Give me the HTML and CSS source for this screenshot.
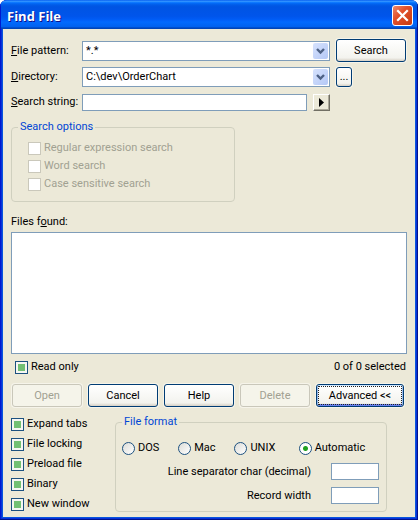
FILE: index.html
```html
<!DOCTYPE html>
<html lang="en">
<head>
<meta charset="utf-8">
<title>Find File</title>
<link rel="stylesheet" href="styles.css">
</head>
<body>
<div class="window">
  <header class="titlebar">
    <h1>Find File</h1>
    <button class="close" type="button" aria-label="Close">
      <svg viewBox="0 0 13 13" width="13" height="13"><path d="M2 2L11 11M11 2L2 11" stroke="#fff" stroke-width="2.2" stroke-linecap="square"/></svg>
    </button>
  </header>
  <form class="dialog">
    <div class="search">
      <label for="pattern"><u>F</u>ile pattern:</label>
      <div class="combo">
        <select id="pattern"><option>*.*</option></select>
        <svg class="drop" viewBox="0 0 15 15"><path d="M4 5.5L7.5 9L11 5.5" fill="none" stroke="#4d6185" stroke-width="2.4"/></svg>
      </div>
      <button class="btn" type="button">Search</button>

      <label for="directory"><u>D</u>irectory:</label>
      <div class="combo">
        <select id="directory"><option>C:\dev\OrderChart</option></select>
        <svg class="drop" viewBox="0 0 15 15"><path d="M4 5.5L7.5 9L11 5.5" fill="none" stroke="#4d6185" stroke-width="2.4"/></svg>
      </div>
      <button class="btn browse" type="button">...</button>

      <label for="string"><u>S</u>earch string:</label>
      <div class="string">
        <input class="text" id="string" type="text">
        <button class="arrow" type="button" aria-label="Expressions">
          <svg viewBox="0 0 5 9" width="5" height="9"><path d="M0 0L5 4.5L0 9Z"/></svg>
        </button>
      </div>
    </div>

    <fieldset class="group options">
      <legend>Search options</legend>
      <label class="check"><input type="checkbox" disabled>Regular expression search</label>
      <label class="check"><input type="checkbox" disabled>Word search</label>
      <label class="check"><input type="checkbox" disabled>Case sensitive search</label>
    </fieldset>

    <label class="found" for="files">Files f<u>o</u>und:</label>
    <select class="files" id="files" size="8"></select>

    <div class="status">
      <label class="check"><input type="checkbox" checked>Read only</label>
      <span>0 of 0 selected</span>
    </div>

    <div class="actions">
      <button class="btn" type="button" disabled>Open</button>
      <button class="btn" type="button">Cancel</button>
      <button class="btn" type="button">Help</button>
      <button class="btn" type="button" disabled>Delete</button>
      <button class="btn active" type="button">Advanced &lt;&lt;</button>
    </div>

    <div class="advanced">
      <div class="toggles">
        <label class="check"><input type="checkbox" checked>Expand tabs</label>
        <label class="check"><input type="checkbox" checked>File locking</label>
        <label class="check"><input type="checkbox" checked>Preload file</label>
        <label class="check"><input type="checkbox" checked>Binary</label>
        <label class="check"><input type="checkbox" checked>New window</label>
      </div>
      <fieldset class="group format">
        <legend>File format</legend>
        <div class="radios">
          <label class="check"><input type="radio" name="format">DOS</label>
          <label class="check"><input type="radio" name="format">Mac</label>
          <label class="check"><input type="radio" name="format">UNIX</label>
          <label class="check"><input type="radio" name="format" checked>Automatic</label>
        </div>
        <div class="values">
          <label for="separator">Line separator char (decimal)</label>
          <input class="text" id="separator" type="text">
          <label for="record">Record width</label>
          <input class="text" id="record" type="text">
        </div>
      </fieldset>
    </div>
  </form>
</div>
</body>
</html>
```
FILE: styles.css
```css
* {
  box-sizing: border-box;
}

body {
  margin: 0;
  background: #fff;
  color: #000;
  font: 11px/14px Roboto, "Liberation Sans", sans-serif;
}

button,
input,
select {
  margin: 0;
  color: inherit;
  font: inherit;
}

.window {
  display: flex;
  flex-direction: column;
  min-height: 100vh;
  overflow: hidden;
  border-radius: 7px 7px 0 0;
  background: #ece9d8;
  box-shadow: inset -1px -1px #00138c, inset 1px 0 #0019cf, inset -2px -2px #0831d9, inset 2px 0 #0831d9, inset 0 0 0 3px #0855dd;
}

.titlebar {
  display: flex;
  align-items: center;
  justify-content: space-between;
  height: 29px;
  padding: 2px 5px 0 7px;
  background: linear-gradient(#0058ee 0, #3593ff 4%, #288eff 6%, #127dff 8%, #036ffc 10%, #0262ee 14%, #0057e5 20%, #0054e3 24%, #0055eb 56%, #005bf5 66%, #026afe 76%, #0062ef 92%, #0052d6 94%, #0040ab 100%);
  box-shadow: inset -1px 0 #00138c, inset 1px 0 #0019cf;
}

.titlebar h1 {
  margin: 0;
  color: #fff;
  font: bold 13px/18px "Open Sans", sans-serif;
  text-shadow: 1px 1px #0f1089;
}

.close {
  display: flex;
  align-items: center;
  justify-content: center;
  width: 21px;
  height: 21px;
  padding: 0;
  border: 1px solid #fff;
  border-radius: 3px;
  background: linear-gradient(135deg, #ee8a6c, #e2502b 40%, #c63a10);
}

.dialog {
  display: flex;
  flex: 1;
  flex-direction: column;
  padding: 10px 11px 8px;
}

.search {
  display: grid;
  grid-template-columns: 65px 1fr 71px;
  grid-template-rows: 23px 20px 20px;
  align-items: center;
  gap: 5px 6px;
  white-space: nowrap;
}

.combo {
  position: relative;
}

.combo select {
  display: block;
  width: 100%;
  height: 20px;
  padding: 0 20px 0 3px;
  border: 1px solid #7f9db9;
  border-radius: 0;
  appearance: none;
  background: #fff;
}

.drop {
  position: absolute;
  top: 2px;
  right: 2px;
  width: 15px;
  height: 16px;
  border-radius: 2px;
  background: linear-gradient(135deg, #d6e2fd, #b4c8f6);
  pointer-events: none;
}

.btn {
  height: 23px;
  padding: 0;
  border: 1px solid #003c74;
  border-radius: 3px;
  background: linear-gradient(#fff, #f3f3ee 85%, #d6d0c5);
  box-shadow: 0 0 0 1px #f6f4ea;
}

.search .btn {
  margin-right: 1px;
}

.btn:disabled {
  border-color: #c9c7ba;
  background: #f5f4ea;
  color: #a1a192;
}

.btn.active {
  outline: 1px dotted #222;
  outline-offset: -3px;
  box-shadow: inset 0 1px #cee7ff, inset 1px 0 #98b8ea, inset -1px 0 #98b8ea, inset 0 -2px #6982ee, 0 0 0 1px #f6f4ea;
}

.btn.browse {
  width: 16px;
  height: 20px;
}

.string {
  display: flex;
  align-items: center;
  gap: 6px;
}

.text {
  min-width: 0;
  height: 17px;
  padding: 0 3px;
  border: 1px solid #7f9db9;
  background: #fff;
}

.string .text {
  flex: 1;
}

.arrow {
  display: flex;
  align-items: center;
  justify-content: center;
  width: 17px;
  height: 17px;
  padding: 0;
  border: 1px solid;
  border-color: #fff #716f64 #716f64 #fff;
  background: #ece9d8;
  box-shadow: inset -1px -1px #aca899;
}

.group {
  min-width: 0;
  margin: 0;
  border: 1px solid #d0d0bf;
  border-radius: 4px;
}

.group legend {
  padding: 0 2px;
  color: #0046d5;
}

.check {
  display: flex;
  align-items: center;
  gap: 3px;
}

.check input {
  flex: none;
  width: 13px;
  height: 13px;
  border: 1px solid #1c5180;
  appearance: none;
  background: #fff;
}

.check input[type="checkbox"]:checked {
  background: linear-gradient(#73c073, #73c073) center / 7px 7px no-repeat #f6f6f2;
}

.check input[type="radio"] {
  border-radius: 50%;
  background: linear-gradient(135deg, #dcdcd7, #fff);
}

.check input[type="radio"]:checked {
  background: radial-gradient(circle, #21a121 0, #21a121 2px, #fff 3px);
}

.check input:disabled {
  border-color: #cac8bb;
}

.check:has(:disabled) {
  color: #a1a192;
}

.options {
  display: grid;
  gap: 4px;
  width: 224px;
  margin-top: 8px;
  padding: 7px 6px 10px;
}

.options .check {
  margin-left: 10px;
}

.found {
  margin: 13px 0 3px;
}

.files {
  flex: 1 1 0;
  min-height: 60px;
  border: 1px solid #7f9db9;
  border-radius: 0;
  background: #fff;
}

.status {
  display: flex;
  align-items: center;
  justify-content: space-between;
  padding: 6px 1px 10px 4px;
}

.actions {
  display: grid;
  grid-template-columns: repeat(4, 70fr) 88fr;
  gap: 6px;
  padding: 0 3px 0 1px;
}

.advanced {
  display: flex;
  gap: 18px;
  margin-top: 8px;
}

.toggles {
  display: grid;
  flex: none;
  gap: 6px;
  align-content: start;
  width: 86px;
  margin-top: 2px;
}

.format {
  flex: 1;
  margin-right: 20px;
  padding: 12px 7px 7px 6px;
}

.radios {
  display: grid;
  grid-template-columns: 56fr 56fr 64fr 80fr;
  margin-bottom: 8px;
}

.values {
  display: grid;
  grid-template-columns: 1fr 48px;
  gap: 7px 20px;
  align-items: center;
  text-align: right;
}
```
